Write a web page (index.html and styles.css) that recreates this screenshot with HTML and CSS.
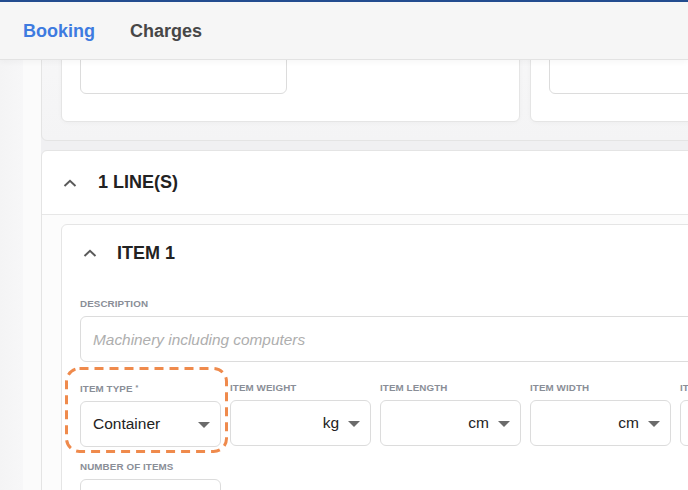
FILE: index.html
```html
<!DOCTYPE html>
<html lang="en">
<head>
<meta charset="utf-8">
<title>Booking</title>
<link rel="stylesheet" href="styles.css">
</head>
<body>
<header class="topbar">
  <nav class="tabs">
    <span class="tab active">Booking</span>
    <span class="tab">Charges</span>
  </nav>
</header>
<div class="layout">
  <aside class="rail"></aside>
  <main class="main">
    <div class="scroll">
      <section class="panel panel-top">
        <div class="subcard subcard-a"><div class="input input-a"></div></div>
        <div class="subcard subcard-b"><div class="input input-a"></div></div>
      </section>

      <section class="panel lines">
        <div class="panel-head">
          <svg class="chev" width="14" height="8" viewBox="0 0 14 8"><path d="M1.5 7 L7 1.8 L12.5 7" fill="none" stroke="#5a5a5a" stroke-width="2"/></svg>
          <h2 class="title">1 LINE(S)</h2>
        </div>
        <div class="panel-body">
          <div class="item">
            <div class="item-head">
              <svg class="chev" width="14" height="8" viewBox="0 0 14 8"><path d="M1.5 7 L7 1.8 L12.5 7" fill="none" stroke="#5a5a5a" stroke-width="2"/></svg>
              <h3 class="title">ITEM 1</h3>
            </div>
            <div class="item-body">
              <div class="field field-desc">
                <label class="label">DESCRIPTION</label>
                <div class="input input-wide"><span class="ph">Machinery including computers</span></div>
              </div>
              <div class="row">
                <div class="field highlight">
                  <label class="label">ITEM TYPE <span class="req">*</span></label>
                  <div class="select"><span class="val">Container</span><span class="caret"></span></div>
                  <svg class="dash" width="163" height="86" viewBox="0 0 163 86"><rect x="1.5" y="1.5" width="160" height="83" rx="13" ry="13" fill="none" stroke="#ef8a4c" stroke-width="3" stroke-dasharray="9 6"/></svg>
                </div>
                <div class="field">
                  <label class="label">ITEM WEIGHT</label>
                  <div class="select unit"><span class="val">kg</span><span class="caret"></span></div>
                </div>
                <div class="field">
                  <label class="label">ITEM LENGTH</label>
                  <div class="select unit"><span class="val">cm</span><span class="caret"></span></div>
                </div>
                <div class="field">
                  <label class="label">ITEM WIDTH</label>
                  <div class="select unit"><span class="val">cm</span><span class="caret"></span></div>
                </div>
                <div class="field">
                  <label class="label">ITEM HEIGHT</label>
                  <div class="select unit"><span class="val">cm</span><span class="caret"></span></div>
                </div>
              </div>
              <div class="field field-count">
                <label class="label">NUMBER OF ITEMS</label>
                <div class="input input-small"></div>
              </div>
            </div>
          </div>
        </div>
      </section>
    </div>
  </main>
</div>
</body>
</html>
```

FILE: styles.css
```css
* { box-sizing: border-box; }
html, body {
  margin: 0;
  padding: 0;
  width: 688px;
  height: 490px;
  overflow: hidden;
  font-family: "Liberation Sans", Arial, sans-serif;
  background: #f0f0f2;
}

.topbar {
  position: relative;
  z-index: 2;
  height: 60px;
  border-top: 2px solid #234c8f;
  border-bottom: 1px solid #e3e3e3;
  background: #f6f6f6;
  box-shadow: 0 2px 6px rgba(0,0,0,0.04);
  display: flex;
  align-items: center;
  padding-left: 23px;
}
.tabs { display: flex; gap: 35px; margin-top: 1px; }
.tab {
  font-size: 18px;
  font-weight: 700;
  color: #474747;
  line-height: 21px;
}
.tab.active { color: #3e7be0; }

.layout {
  display: flex;
  height: 430px;
}
.rail {
  width: 23px;
  flex: none;
  background: linear-gradient(to right, #f4f4f5, #f7f7f8);
}
.main {
  flex: 1;
  overflow: hidden;
  background: linear-gradient(to right, #fbfbfb 18px, #f0f0f2 18px);
  padding-left: 18px;
}
.scroll {
  width: 1100px;
  margin-top: -54px;
}

.panel {
  border: 1px solid #e4e4e4;
  border-radius: 6px;
}
.panel-top {
  display: flex;
  gap: 10px;
  padding: 20px 0 18px 19px;
  background: linear-gradient(#f8f8f9, #f4f4f5);
  margin-bottom: 9px;
}
.subcard {
  background: #fff;
  border: 1px solid #e5e5e5;
  border-radius: 6px;
  padding: 20px 18px 27px;
  box-shadow: 0 1px 4px rgba(0,0,0,0.03);
}
.subcard-a { width: 459px; }
.subcard-b { width: 500px; }
.input {
  height: 46px;
  border: 1px solid #dcdcdc;
  border-radius: 6px;
  background: #fff;
}
.input-a { width: 207px; }

.lines { background: #fff; }
.panel-head {
  height: 64px;
  border-bottom: 1px solid #e7e7e7;
  display: flex;
  align-items: center;
  padding-left: 21px;
  gap: 21px;
}
.title {
  margin: 0;
  font-size: 18px;
  font-weight: 700;
  color: #222;
  line-height: 21px;
}
.chev { display: block; flex: none; }
.panel-body {
  background: #fcfcfc;
  padding: 9px 0 0 19px;
}
.item {
  background: #fff;
  border: 1px solid #e5e5e5;
  border-radius: 6px;
  width: 1000px;
}
.item-head {
  height: 56px;
  display: flex;
  align-items: center;
  padding-left: 21px;
  gap: 20px;
}
.item-body {
  padding: 17px 0 20px 18px;
}

.field { position: relative; }
.label {
  display: block;
  font-size: 9.8px;
  font-weight: 700;
  line-height: 12px;
  color: #8a8e97;
  margin-bottom: 6px;
  letter-spacing: 0.1px;
  white-space: nowrap;
}
.req { font-size: 7px; vertical-align: 2px; }
.input-wide {
  width: 700px;
  display: flex;
  align-items: center;
  padding-left: 12px;
}
.ph {
  font-style: italic;
  font-size: 15.4px;
  color: #aeaeae;
  margin-top: 1px;
}
.field-desc { margin-bottom: 20px; }

.row {
  display: flex;
  gap: 9px;
}
.row .field { width: 141px; flex: none; }
.select {
  height: 46px;
  border: 1px solid #dcdcdc;
  border-radius: 6px;
  background: #fff;
  display: flex;
  align-items: center;
  padding: 0 10px 0 12px;
  font-size: 15.5px;
  color: #222;
}
.select .val { flex: 1; }
.select.unit .val { text-align: right; }
.caret {
  width: 0;
  height: 0;
  border-left: 6px solid transparent;
  border-right: 6px solid transparent;
  border-top: 6px solid #6b6b6b;
  margin-left: 9px;
  margin-top: 1px;
}
.dash {
  position: absolute;
  left: -15px;
  top: -15px;
  pointer-events: none;
}
.field-count { margin-top: 14px; }
.input-small { width: 141px; }
```
